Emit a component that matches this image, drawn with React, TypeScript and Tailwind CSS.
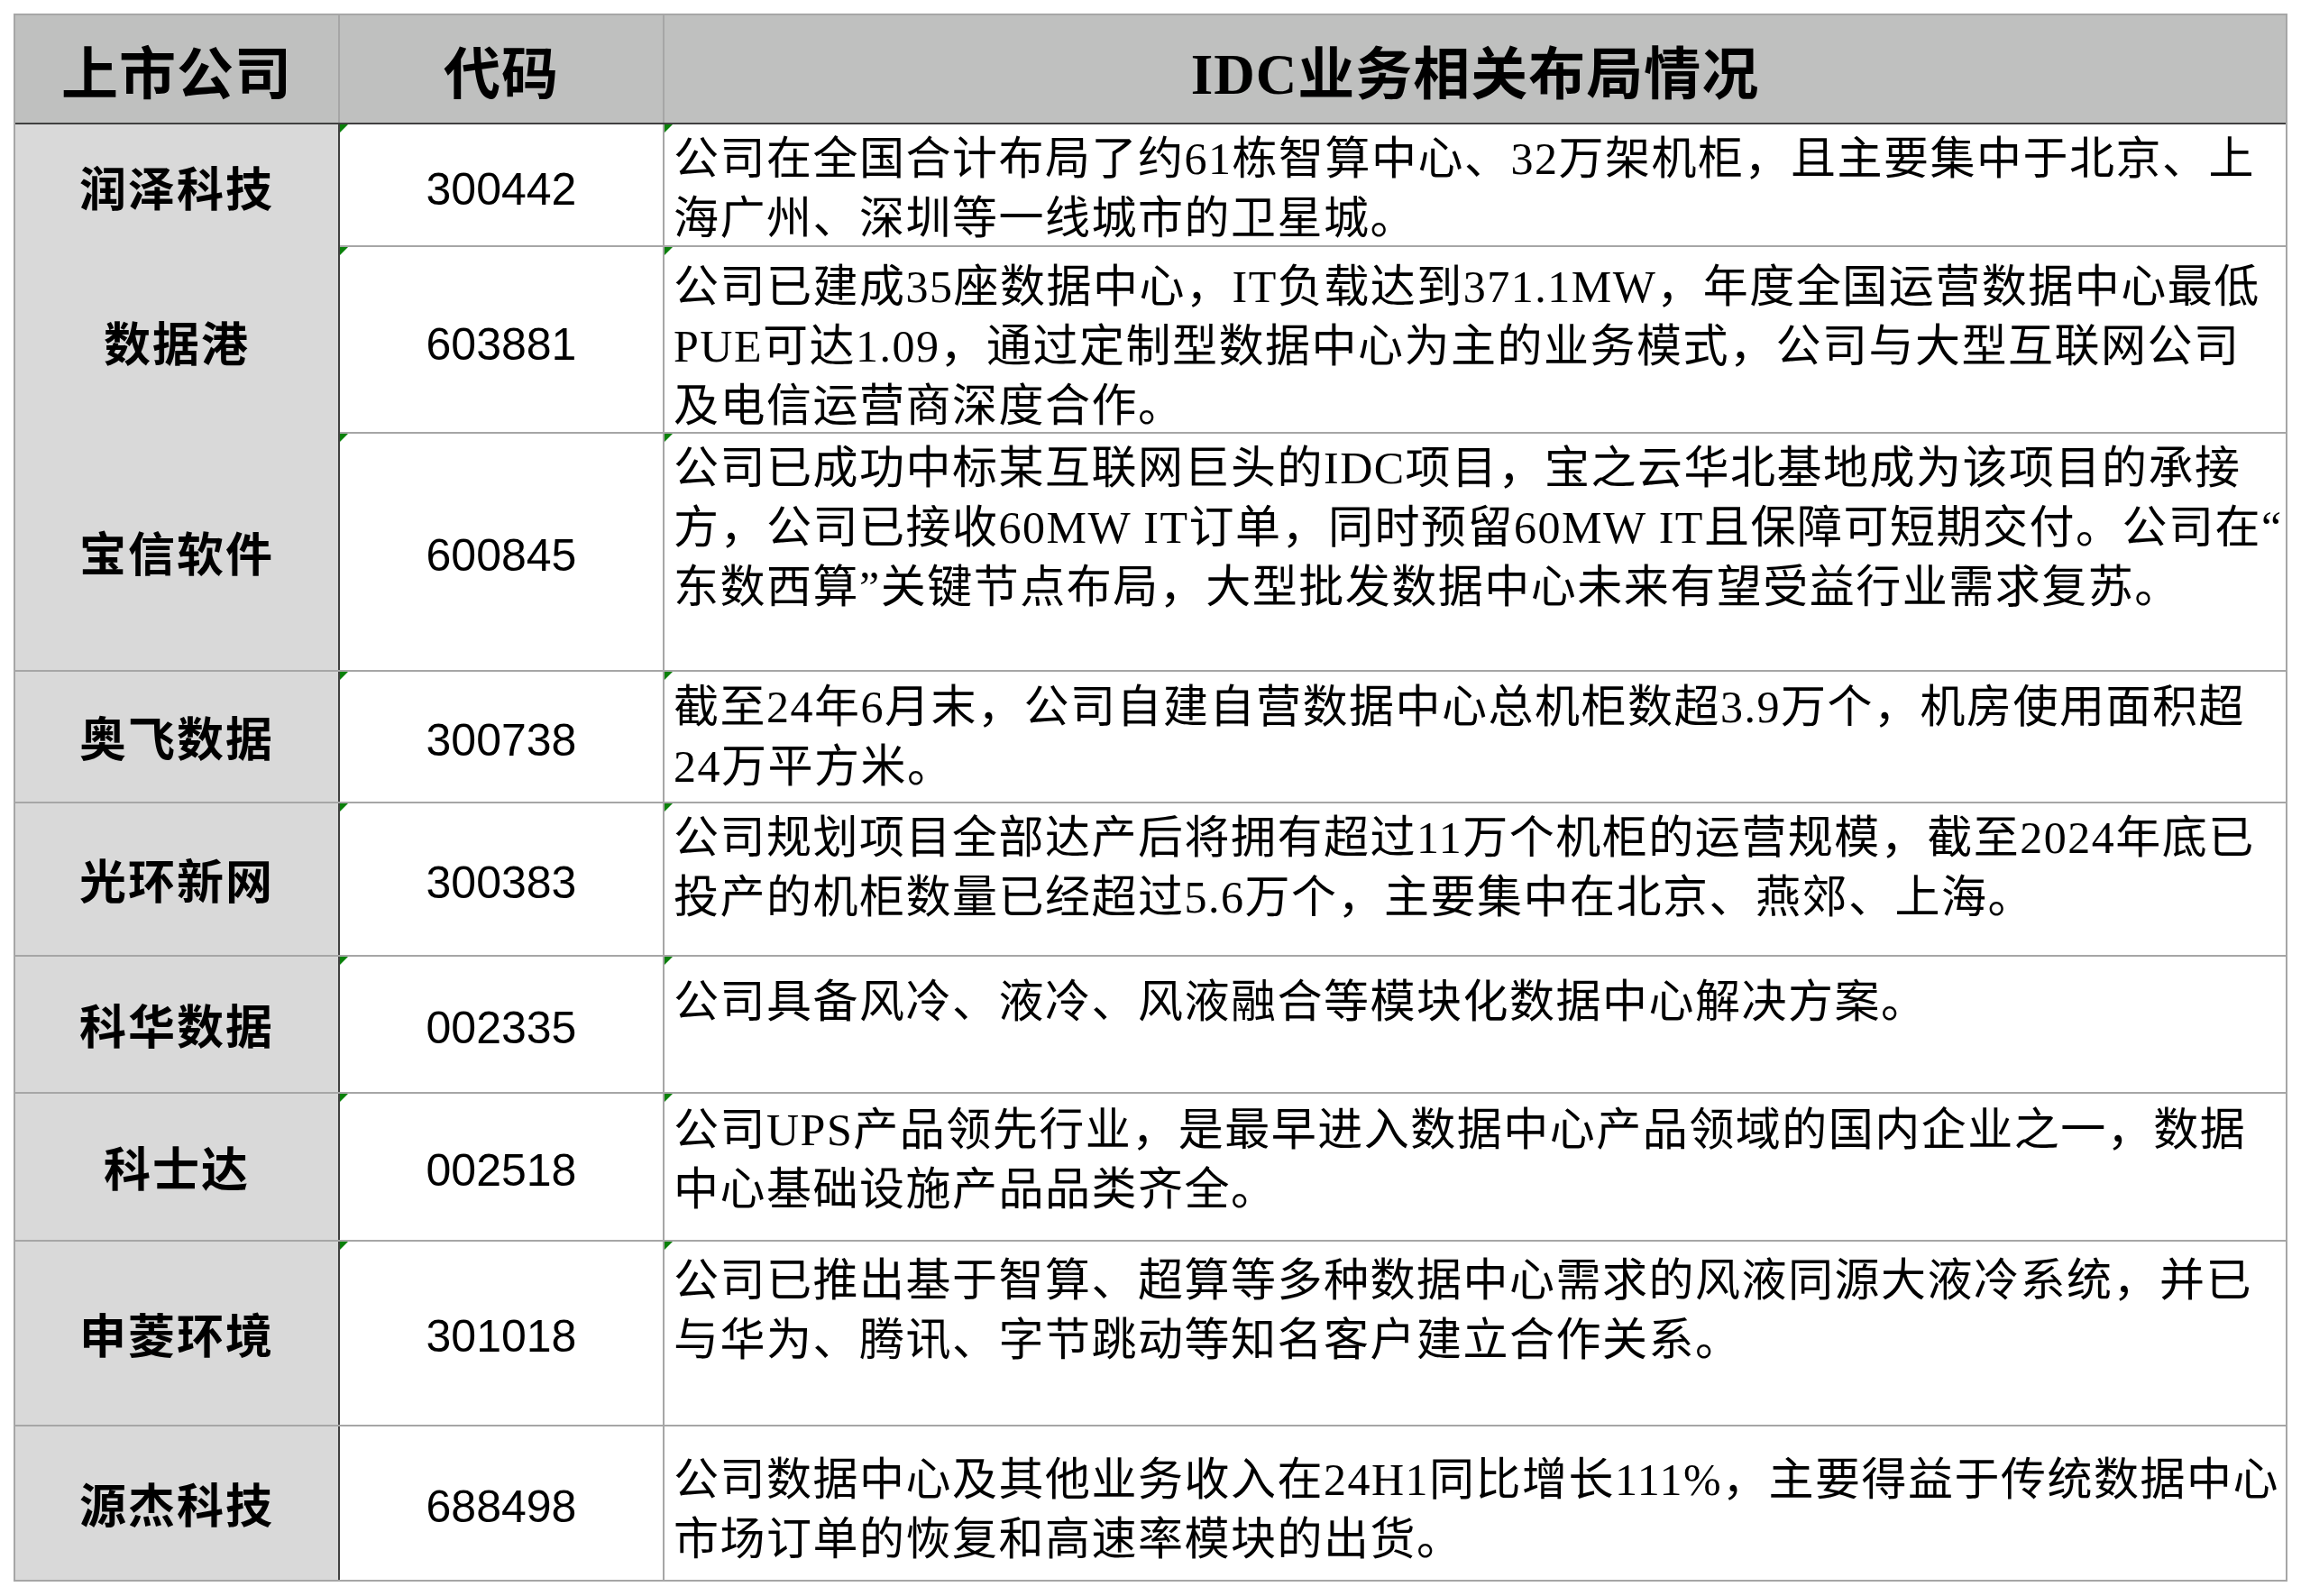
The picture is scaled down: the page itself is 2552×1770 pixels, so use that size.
import React from "react";

type Row = {
  name: string;
  code: string;
  h: number;
  pt: number;
  mark: boolean;
  lines: string[];
};

const rows: Row[] = [
  {
    name: "润泽科技",
    code: "300442",
    h: 136,
    pt: 5,
    mark: true,
    lines: [
      "公司在全国合计布局了约61栋智算中心、32万架机柜，且主要集中于北京、上",
      "海广州、深圳等一线城市的卫星城。",
    ],
  },
  {
    name: "数据港",
    code: "603881",
    h: 207,
    pt: 11,
    mark: true,
    lines: [
      "公司已建成35座数据中心，IT负载达到371.1MW，年度全国运营数据中心最低",
      "PUE可达1.09，通过定制型数据中心为主的业务模式，公司与大型互联网公司",
      "及电信运营商深度合作。",
    ],
  },
  {
    name: "宝信软件",
    code: "600845",
    h: 264,
    pt: 5,
    mark: true,
    lines: [
      "公司已成功中标某互联网巨头的IDC项目，宝之云华北基地成为该项目的承接",
      "方，公司已接收60MW IT订单，同时预留60MW IT且保障可短期交付。公司在“",
      "东数西算”关键节点布局，大型批发数据中心未来有望受益行业需求复苏。",
    ],
  },
  {
    name: "奥飞数据",
    code: "300738",
    h: 146,
    pt: 6,
    mark: true,
    lines: [
      "截至24年6月末，公司自建自营数据中心总机柜数超3.9万个，机房使用面积超",
      "24万平方米。",
    ],
  },
  {
    name: "光环新网",
    code: "300383",
    h: 170,
    pt: 5,
    mark: true,
    lines: [
      "公司规划项目全部达产后将拥有超过11万个机柜的运营规模，截至2024年底已",
      "投产的机柜数量已经超过5.6万个，主要集中在北京、燕郊、上海。",
    ],
  },
  {
    name: "科华数据",
    code: "002335",
    h: 152,
    pt: 17,
    mark: true,
    lines: ["公司具备风冷、液冷、风液融合等模块化数据中心解决方案。"],
  },
  {
    name: "科士达",
    code: "002518",
    h: 164,
    pt: 7,
    mark: true,
    lines: [
      "公司UPS产品领先行业，是最早进入数据中心产品领域的国内企业之一，数据",
      "中心基础设施产品品类齐全。",
    ],
  },
  {
    name: "申菱环境",
    code: "301018",
    h: 205,
    pt: 10,
    mark: true,
    lines: [
      "公司已推出基于智算、超算等多种数据中心需求的风液同源大液冷系统，并已",
      "与华为、腾讯、字节跳动等知名客户建立合作关系。",
    ],
  },
  {
    name: "源杰科技",
    code: "688498",
    h: 170,
    pt: 26,
    mark: false,
    lines: [
      "公司数据中心及其他业务收入在24H1同比增长111%，主要得益于传统数据中心",
      "市场订单的恢复和高速率模块的出货。",
    ],
  },
];

function Mark() {
  return (
    <div className="absolute left-0 top-0 h-0 w-0 border-t-[9px] border-r-[9px] border-t-[#0a800a] border-r-transparent" />
  );
}

export default function App() {
  return (
    <div
      lang="zh-CN"
      className="min-h-screen bg-white pl-[15px] pt-[15px] text-black font-['Liberation_Serif','Noto_Sans_CJK_SC',serif]"
    >
      <div className="w-[2522px] border-2 border-[#a6a6a6]">
        {/* header */}
        <div className="grid h-[121px] grid-cols-[360px_360px_1798px] border-b-2 border-[#404040] bg-[#bfc0bf]">
          <div className="flex items-center justify-center border-r-2 border-[#a6a6a6] pt-[14px] text-[63px] font-bold leading-none tracking-[1px]">
            上市公司
          </div>
          <div className="flex items-center justify-center border-r-2 border-[#a6a6a6] pt-[14px] text-[63px] font-bold leading-none tracking-[1px]">
            代码
          </div>
          <div className="flex items-center justify-center pt-[14px] text-[63px] font-bold leading-none tracking-[1px]">
            IDC业务相关布局情况
          </div>
        </div>

        {rows.map((r, i) => {
          const last = i === rows.length - 1;
          return (
            <div
              key={r.code}
              style={{ height: r.h }}
              className={
                last
                  ? "grid grid-cols-[360px_360px_1798px]"
                  : "grid grid-cols-[360px_360px_1798px] border-b-2 border-[#a6a6a6]"
              }
            >
              <div className="flex items-center justify-center border-r-2 border-[#404040] bg-[#d9d9d9] pt-[10px] text-[52px] font-bold leading-none tracking-[2px]">
                {r.name}
              </div>
              <div className="relative flex items-center justify-center border-r-2 border-[#a6a6a6] pt-[7px] font-['Liberation_Sans',sans-serif] text-[50px] leading-none">
                {r.mark && <Mark />}
                {r.code}
              </div>
              <div
                className="relative pl-[10px] text-[50px] leading-[66px] tracking-[1.5px]"
                style={{ paddingTop: r.pt }}
              >
                {r.mark && <Mark />}
                {r.lines.map((l, j) => (
                  <div key={j} className="whitespace-nowrap">
                    {l}
                  </div>
                ))}
              </div>
            </div>
          );
        })}
      </div>
    </div>
  );
}
